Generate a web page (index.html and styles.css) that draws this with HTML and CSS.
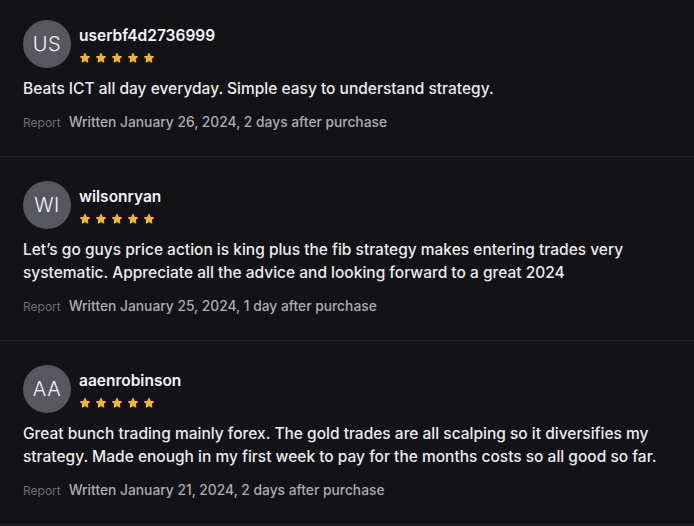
FILE: index.html
```html
<!DOCTYPE html>
<html>
<head>
<meta charset="utf-8">
<link rel="stylesheet" href="styles.css">
</head>
<body>
<svg width="0" height="0" class="defs">
  <defs>
    <symbol id="star" viewBox="0 0 24 24">
      <path d="M12 3.2l2.6 5.6 6.1.7-4.5 4.2 1.2 6-5.4-3-5.4 3 1.2-6-4.5-4.2 6.1-.7z" fill="#f6b42a" stroke="#f6b42a" stroke-width="2.6" stroke-linejoin="round"/>
    </symbol>
  </defs>
</svg>
<div class="list">
  <div class="review first">
    <div class="head">
      <div class="avatar">US</div>
      <div class="meta">
        <div class="name">userbf4d2736999</div>
        <div class="stars">
          <svg class="star"><use href="#star"/></svg><svg class="star"><use href="#star"/></svg><svg class="star"><use href="#star"/></svg><svg class="star"><use href="#star"/></svg><svg class="star"><use href="#star"/></svg>
        </div>
      </div>
    </div>
    <p class="text">Beats ICT all day everyday. Simple easy to understand strategy.</p>
    <div class="foot"><span class="report">Report</span><span class="written">Written January 26, 2024, 2 days after purchase</span></div>
  </div>
  <div class="review">
    <div class="head">
      <div class="avatar">WI</div>
      <div class="meta">
        <div class="name">wilsonryan</div>
        <div class="stars">
          <svg class="star"><use href="#star"/></svg><svg class="star"><use href="#star"/></svg><svg class="star"><use href="#star"/></svg><svg class="star"><use href="#star"/></svg><svg class="star"><use href="#star"/></svg>
        </div>
      </div>
    </div>
    <p class="text">Let’s go guys price action is king plus the fib strategy makes entering trades very systematic. Appreciate all the advice and looking forward to a great 2024</p>
    <div class="foot"><span class="report">Report</span><span class="written">Written January 25, 2024, 1 day after purchase</span></div>
  </div>
  <div class="review">
    <div class="head">
      <div class="avatar">AA</div>
      <div class="meta">
        <div class="name">aaenrobinson</div>
        <div class="stars">
          <svg class="star"><use href="#star"/></svg><svg class="star"><use href="#star"/></svg><svg class="star"><use href="#star"/></svg><svg class="star"><use href="#star"/></svg><svg class="star"><use href="#star"/></svg>
        </div>
      </div>
    </div>
    <p class="text">Great bunch trading mainly forex. The gold trades are all scalping so it diversifies my strategy. Made enough in my first week to pay for the months costs so all good so far.</p>
    <div class="foot"><span class="report">Report</span><span class="written">Written January 21, 2024, 2 days after purchase</span></div>
  </div>
</div>
</body>
</html>
```
FILE: styles.css
```css
html, body {
  margin: 0;
  padding: 0;
  background: #131216;
}
body {
  font-family: Inter, "Noto Sans", sans-serif;
  color: #ececee;
}
.defs {
  position: absolute;
  width: 0;
  height: 0;
}
.list {
  display: flex;
  flex-direction: column;
}
.review {
  padding: 24px 23px 23px;
  border-bottom: 1px solid #2a292d;
}
.review.first {
  padding-top: 20px;
}
.head {
  display: flex;
  align-items: flex-start;
  gap: 8px;
}
.avatar {
  width: 48px;
  height: 48px;
  border-radius: 50%;
  background: #57575f;
  color: #f4f4f6;
  font-size: 20px;
  font-weight: 300;
  display: flex;
  align-items: center;
  justify-content: center;
  letter-spacing: 0.5px;
}
.meta {
  display: flex;
  flex-direction: column;
  padding-top: 6px;
}
.name {
  font-size: 15.5px;
  font-weight: 600;
  line-height: 20px;
  color: #f4f4f6;
}
.stars {
  display: flex;
  gap: 4px;
  margin-top: 6px;
}
.star {
  width: 12px;
  height: 12px;
}
.text {
  margin: 9px 0 0;
  font-size: 15.5px;
  font-weight: 500;
  line-height: 23px;
  color: #ececee;
}
.foot {
  display: flex;
  align-items: baseline;
  gap: 8px;
  margin-top: 12px;
  line-height: 20px;
}
.report {
  font-size: 12px;
  color: #6e6d74;
}
.written {
  font-size: 13.8px;
  font-weight: 500;
  color: #adacb2;
}
```
